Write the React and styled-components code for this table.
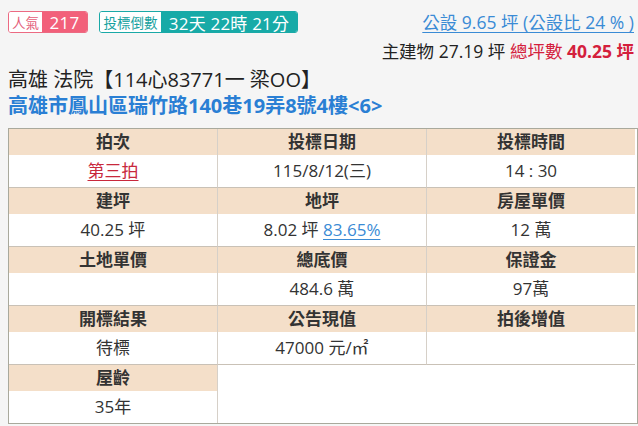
import React from "react";
import styled, { createGlobalStyle } from "styled-components";

const Global = createGlobalStyle`
  html, body { margin: 0; padding: 0; background: #f5f5f5; }
  body { font-family: "Open Sans", "Noto Sans CJK TC", sans-serif; color: #333; }
  #root { padding: 0 0 0 8px; }
`;

const Top = styled.div`
  display: flex;
  justify-content: space-between;
  align-items: flex-start;
  padding-top: 11px;
  padding-right: 4px;
`;

const Badges = styled.div`
  display: flex;
  gap: 11px;
`;

const Badge = styled.div`
  display: flex;
  height: 22px;
  box-sizing: border-box;
  border: 1px solid ${(p) => p.$c};
  border-radius: 3px;
  overflow: hidden;
  background: #fff;
`;

const BadgeLabel = styled.span`
  display: flex;
  align-items: center;
  justify-content: center;
  width: ${(p) => p.$w}px;
  font-size: 13.5px;
  color: ${(p) => p.$c};
  background: #fff;
`;

const BadgeValue = styled.span`
  display: flex;
  align-items: center;
  justify-content: center;
  width: ${(p) => p.$w}px;
  font-size: 17px;
  color: #fff;
  background: ${(p) => p.$c};
  letter-spacing: 0.2px;
`;

const Right = styled.div`
  display: flex;
  flex-direction: column;
  align-items: flex-end;
  gap: 7px;
`;

const Line = styled.div`
  height: 22px;
  line-height: 22px;
  font-size: 17.5px;
  white-space: nowrap;
  color: #222;
`;

const Link = styled.span`
  color: ${(p) => p.$c || "#3a8bd5"};
  text-decoration: underline;
  text-underline-offset: 3px;
  text-decoration-thickness: 1px;
`;

const Red = styled.span`
  color: #d4203c;
  font-weight: ${(p) => (p.$bold ? 700 : 400)};
`;

const Title = styled.div`
  margin-top: 5px;
  height: 26px;
  line-height: 26px;
  font-size: 20px;
  color: #222;
  white-space: nowrap;
`;

const Address = styled.div`
  height: 26px;
  line-height: 26px;
  font-size: 20px;
  font-weight: 700;
  color: #2a7fd4;
  white-space: nowrap;
`;

const Table = styled.div`
  margin-top: 9px;
  width: 630px;
  box-sizing: border-box;
  border: 1px solid #a9a99c;
  background: #fff;
  padding-right: 2px;
  display: grid;
  grid-template-columns: 209px 209px 208px;
`;

const Cell = styled.div`
  display: flex;
  flex-direction: column;
  border-right: ${(p) => (p.$last ? "none" : "1px solid #d6d0c8")};
  border-bottom: ${(p) => (p.$bottom ? "none" : "1px solid #c9c1b6")};
  grid-column: span ${(p) => p.$span || 1};
`;

const Label = styled.div`
  height: 26px;
  line-height: 26px;
  background: #f4dfc9;
  text-align: center;
  font-size: 17px;
  font-weight: 700;
  color: #333;
`;

const Value = styled.div`
  height: 32px;
  line-height: 32px;
  text-align: center;
  font-size: 17px;
  color: #333;
  white-space: nowrap;
`;

const rows = [
  [
    { l: "拍次", v: <Link $c="#c8283c">第三拍</Link> },
    { l: "投標日期", v: "115/8/12(三)" },
    { l: "投標時間", v: "14 : 30" },
  ],
  [
    { l: "建坪", v: "40.25 坪" },
    { l: "地坪", v: <>8.02 坪 <Link>83.65%</Link></> },
    { l: "房屋單價", v: "12 萬" },
  ],
  [
    { l: "土地單價", v: "" },
    { l: "總底價", v: "484.6 萬" },
    { l: "保證金", v: "97萬" },
  ],
  [
    { l: "開標結果", v: "待標" },
    { l: "公告現值", v: "47000 元/㎡" },
    { l: "拍後增值", v: "" },
  ],
];

export default function App() {
  return (
    <>
      <Global />
      <Top>
        <Badges>
          <Badge $c="#ec6a82">
            <BadgeLabel $w={33} $c="#e4607a">人氣</BadgeLabel>
            <BadgeValue $w={45} $c="#f2607a">217</BadgeValue>
          </Badge>
          <Badge $c="#1aa9a7">
            <BadgeLabel $w={61} $c="#17a2a0">投標倒數</BadgeLabel>
            <BadgeValue $w={136} $c="#17aaa7">32天 22時 21分</BadgeValue>
          </Badge>
        </Badges>
        <Right>
          <Line>
            <Link>公設 9.65 坪 (公設比 24 % )</Link>
          </Line>
          <Line>
            主建物 27.19 坪 <Red>總坪數</Red> <Red $bold>40.25 坪</Red>
          </Line>
        </Right>
      </Top>
      <Title>高雄 法院【114心83771一 梁OO】</Title>
      <Address>高雄市鳳山區瑞竹路140巷19弄8號4樓&lt;6&gt;</Address>
      <Table>
        {rows.map((r, i) =>
          r.map((c, j) => (
            <Cell key={`${i}-${j}`} $last={j === 2}>
              <Label>{c.l}</Label>
              <Value>{c.v}</Value>
            </Cell>
          ))
        )}
        <Cell $bottom>
          <Label>屋齡</Label>
          <Value>35年</Value>
        </Cell>
        <Cell $bottom $last $span={2} />
      </Table>
    </>
  );
}
